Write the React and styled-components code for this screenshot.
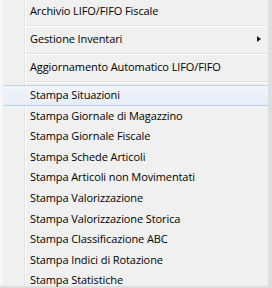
import React from 'react';
import styled, { createGlobalStyle } from 'styled-components';

const GlobalStyle = createGlobalStyle`
  html, body {
    margin: 0;
    padding: 0;
    background: #dedede;
  }
`

const Frame = styled.div`
  width: 272px;
  height: 288px;
  overflow: hidden;
  box-sizing: border-box;
  padding: 0 4px 2px 0;
  background: #dedede;
  display: flex;
`

const Menu = styled.div`
  flex: 1;
  display: flex;
  flex-direction: column;
  border-left: 3px solid #f7f7f7;
  background: linear-gradient(to right, #f0f0f0 21px, #e2e3e3 21px 22px, #ffffff 22px 23px, #f0f0f0 23px);
  font-family: "Open Sans", "Noto Sans", sans-serif;
  font-size: 11px;
  color: #000;
  padding-top: 1px;
`

const Item = styled.div`
  position: relative;
  flex: none;
  height: 20.6px;
  line-height: 20.6px;
  padding-left: 27px;
  white-space: nowrap;
  box-sizing: border-box;
  letter-spacing: -0.1px;
  ${p => p.$active && `
    background: linear-gradient(to bottom, #f1f5fb, #e6eef9);
    border-top: 1px solid #b9d2f1;
    border-bottom: 1px solid #b9d2f1;
    line-height: 18.6px;
  `}
`

const Arrow = styled.span`
  position: absolute;
  right: 7px;
  top: 50%;
  margin-top: -3.5px;
  width: 0;
  height: 0;
  border-top: 3.5px solid transparent;
  border-bottom: 3.5px solid transparent;
  border-left: 4px solid #1a1a1a;
`

const Separator = styled.div`
  flex: none;
  height: 7.4px;
  margin-left: 23px;
  box-sizing: border-box;
  padding-top: 3.4px;

  &::before {
    content: '';
    display: block;
    height: 1px;
    background: #e0e0e0;
    border-bottom: 1px solid #ffffff;
  }
`

const topItems = [
  { label: 'Archivio LIFO/FIFO Fiscale' },
  { label: 'Gestione Inventari', submenu: true },
  { label: 'Aggiornamento Automatico LIFO/FIFO' },
]

const printItems = [
  'Stampa Situazioni',
  'Stampa Giornale di Magazzino',
  'Stampa Giornale Fiscale',
  'Stampa Schede Articoli',
  'Stampa Articoli non Movimentati',
  'Stampa Valorizzazione',
  'Stampa Valorizzazione Storica',
  'Stampa Classificazione ABC',
  'Stampa Indici di Rotazione',
  'Stampa Statistiche',
]

export default function App() {
  return (
    <>
      <GlobalStyle />
      <Frame>
        <Menu>
          {topItems.map((item, key) =>
            <React.Fragment key={key}>
              <Item>
                {item.label}
                {item.submenu && <Arrow />}
              </Item>
              <Separator />
            </React.Fragment>
          )}
          {printItems.map((label, key) =>
            <Item key={key} $active={key === 0}>{label}</Item>
          )}
        </Menu>
      </Frame>
    </>
  )
}
